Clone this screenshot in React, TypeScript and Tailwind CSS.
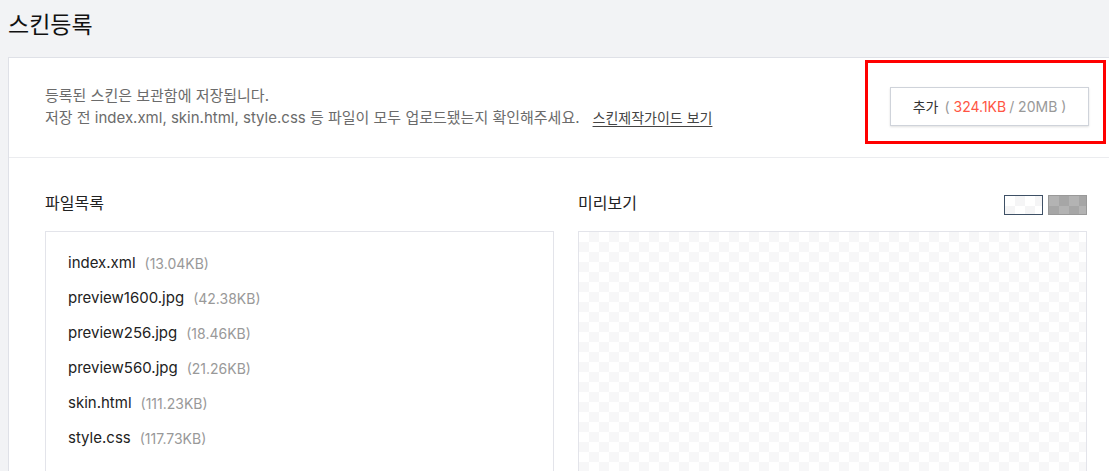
const files = [
  { name: 'index.xml', size: '13.04KB' },
  { name: 'preview1600.jpg', size: '42.38KB' },
  { name: 'preview256.jpg', size: '18.46KB' },
  { name: 'preview560.jpg', size: '21.26KB' },
  { name: 'skin.html', size: '111.23KB' },
  { name: 'style.css', size: '117.73KB' },
]

const font = "font-['Inter','Noto_Sans_CJK_KR',sans-serif]"

export default function App() {
  return (
    <div className={`h-[471px] w-[1109px] overflow-hidden bg-[#f2f3f5] ${font}`}>
      <h1 className="px-2 pt-[7px] pb-[13px] text-[23px] leading-[37px] text-[#111]">스킨등록</h1>

      <div className="ml-2 w-[1118px] border border-[#dfe1e7] bg-white">
        {/* Top info */}
        <div className="flex h-[100px] items-center justify-between border-b border-[#ebecef] px-9">
          <div className="-mt-[1px] text-[15px] leading-[22px] text-[#6b6b6b]">
            <p>등록된 스킨은 보관함에 저장됩니다.</p>
            <p>
              저장 전 index.xml, skin.html, style.css 등 파일이 모두 업로드됐는지 확인해주세요.
              <a className="ml-[13px] text-[14px] text-[#444] underline underline-offset-[3px]">스킨제작가이드 보기</a>
            </p>
          </div>

          <div className="relative -mt-[2px]">
            <button className="flex h-[39px] w-[199px] items-center justify-center border border-[#cfd3da] bg-white text-[14px] shadow-[0_1px_2px_rgba(0,0,0,0.12)]">
              <span className="text-[#333]">추가</span>
              <span className="ml-[6px] text-[#999]">(</span>
              <span className="ml-[4px] text-[#ff5544]">324.1KB</span>
              <span className="ml-[3px] text-[#999]">/ 20MB )</span>
            </button>
            <div className="pointer-events-none absolute -left-[25px] -right-[17px] -top-[27px] -bottom-[18px] border-[3px] border-[#ff0000]" />
          </div>
        </div>

        {/* Bottom: files + preview */}
        <div className="flex gap-6 px-9 pt-[33px]">
          <div className="w-[509px]">
            <h2 className="h-[28px] text-[16px] leading-[24px] text-[#222]">파일목록</h2>
            <div className="mt-[12px] h-[280px] border border-[#e3e4ea] pl-[22px] pt-[14px]">
              <ul>
                {files.map((f) => (
                  <li key={f.name} className="flex h-[35px] items-center">
                    <span className="text-[15px] text-[#222]">{f.name}</span>
                    <span className="ml-[9px] text-[14px] text-[#999]">({f.size})</span>
                  </li>
                ))}
              </ul>
            </div>
          </div>

          <div className="w-[509px]">
            <div className="flex h-[28px] items-start justify-between">
              <h2 className="text-[16px] leading-[24px] text-[#222]">미리보기</h2>
              <div className="mt-[4px] flex gap-[5px]">
                <button className="h-[20px] w-[39px] border-[1.5px] border-[#3e5066] bg-[conic-gradient(#f5f5f6_25%,#ffffff_0_50%,#f5f5f6_0_75%,#ffffff_0)] bg-[length:20px_20px]" />
                <button className="h-[20px] w-[39px] border border-[#999] bg-[conic-gradient(#a6a6a6_25%,#b3b3b3_0_50%,#a6a6a6_0_75%,#b3b3b3_0)] bg-[length:20px_20px]" />
              </div>
            </div>
            <div className="mt-[12px] h-[280px] border border-[#e3e4ea] bg-[conic-gradient(#f7f7f8_25%,#ffffff_0_50%,#f7f7f8_0_75%,#ffffff_0)] bg-[length:20px_20px]" />
          </div>
        </div>
      </div>
    </div>
  )
}
